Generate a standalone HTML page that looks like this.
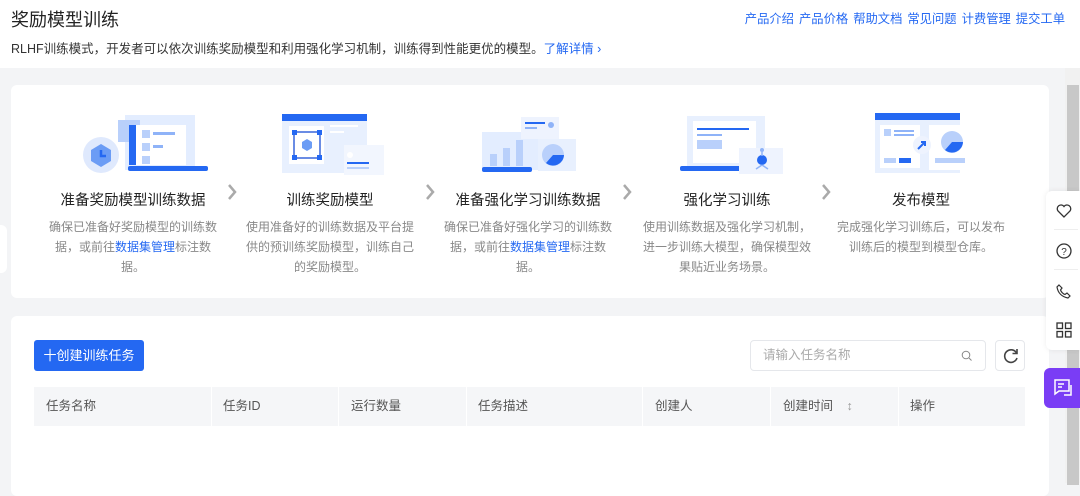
<!DOCTYPE html>
<html><head><meta charset="utf-8"><style>
*{margin:0;padding:0;box-sizing:border-box}
body{width:1080px;height:483px;overflow:hidden;background:#f3f4f6;font-family:"Liberation Sans","Noto Sans CJK SC",sans-serif;position:relative;color:#333}
.abs{position:absolute}
.hdr{left:0;top:0;width:1080px;height:68px;background:#fff}
.title{left:11px;top:6px;font-size:18px;color:#222}
.sub{left:11px;top:38px;font-size:12.5px;color:#333}
.sub a{color:#2468f2;text-decoration:none}
.nav{right:15px;top:9px;font-size:12.3px;color:#2468f2;word-spacing:0}
.nav span{margin-left:5px}
.card1{left:11px;top:85px;width:1038px;height:213px;background:#fff;border-radius:6px}
.step{position:absolute;top:0;width:200px;text-align:center}
.step h4{position:absolute;top:104px;left:0;width:100%;font-size:14.5px;font-weight:normal;color:#222}
.step p{position:absolute;top:132px;left:13px;width:174px;font-size:12px;line-height:20px;color:#888}
.step p b{font-weight:normal;color:#2468f2}
.chev{position:absolute;top:98px;width:10px;height:18px}
.card2{left:11px;top:316px;width:1038px;height:180px;background:#fff;border-radius:6px}
.btn{left:34px;top:340px;width:110px;height:31px;background:#2468f2;border-radius:3px;color:#fff;font-size:13px;line-height:31px;text-align:center}
.search{left:750px;top:340px;width:236px;height:31px;border:1px solid #e5e7eb;border-radius:4px;font-size:12.5px;color:#aaa;line-height:29px;padding-left:12px}
.ref{left:995px;top:340px;width:30px;height:31px;border:1px solid #e5e7eb;border-radius:4px}
.th{left:34px;top:387px;width:991px;height:39px;background:#f5f6f8}
.th div{position:absolute;top:0;height:39px;line-height:39px;font-size:12.5px;color:#555}
.th i{position:absolute;top:0;width:1px;height:39px;background:#fff}
.sb{left:1065px;top:68px;width:15px;height:415px;background:#f1f1f1}
.thumb{left:1067px;top:85px;width:12px;height:400px;background:#c8c8c8}
.panel{left:1046px;top:191px;width:34px;height:159px;background:#fff;border-radius:6px 0 0 6px;box-shadow:0 0 6px rgba(0,0,0,.08)}
.purple{left:1044px;top:368px;width:36px;height:40px;background:#7a3df5;border-radius:6px 0 0 6px}
.lefttab{left:0;top:225px;width:7px;height:48px;background:#fff;border-radius:0 6px 6px 0}
</style></head><body>
<div class="abs hdr"></div>
<div class="abs title">奖励模型训练</div>
<div class="abs sub">RLHF训练模式，开发者可以依次训练奖励模型和利用强化学习机制，训练得到性能更优的模型。<a>了解详情 ›</a></div>
<div class="abs nav"><span>产品介绍</span><span>产品价格</span><span>帮助文档</span><span>常见问题</span><span>计费管理</span><span>提交工单</span></div>

<div class="abs card1">
 <div class="step" style="left:22px">
  <svg class="abs" style="left:50px;top:27px" width="140" height="65">
   <rect x="42" y="3" width="70" height="55" fill="#e3edff"/>
   <rect x="35" y="8" width="22" height="22" fill="#b9d0fb"/>
   <rect x="53" y="13" width="50" height="40" fill="#fff"/>
   <rect x="46" y="13" width="7" height="40" fill="#2468f2"/>
   <rect x="59" y="18" width="8" height="8" fill="#b9d0fb"/><rect x="70" y="20" width="22" height="3" fill="#8fb3f8"/>
   <rect x="59" y="31" width="8" height="8" fill="#b9d0fb"/><rect x="70" y="33" width="10" height="3" fill="#8fb3f8"/>
   <rect x="59" y="44" width="8" height="8" fill="#b9d0fb"/>
   <rect x="45" y="54" width="80" height="5" rx="2" fill="#2468f2"/>
   <circle cx="18" cy="43" r="18" fill="#dfe9fd"/><polygon points="18,32 28,38 28,49 18,55 8,49 8,38" fill="#6b9cf5"/><path d="M18 38v6h5" stroke="#2468f2" stroke-width="2.5" fill="none"/>
  </svg>
  <h4>准备奖励模型训练数据</h4><p>确保已准备好奖励模型的训练数据，或前往<b>数据集管理</b>标注数据。</p>
 </div>
 <div class="step" style="left:219px">
  <svg class="abs" style="left:50px;top:27px" width="110" height="65">
   <rect x="2" y="3" width="85" height="58" fill="#e8f0fe"/><rect x="2" y="2" width="85" height="7" fill="#2468f2"/>
   <rect x="9" y="14" width="35" height="38" fill="#fff"/><rect x="14" y="20" width="26" height="26" fill="none" stroke="#1a4fd6" stroke-width="1.3"/>
   <rect x="12" y="18" width="5" height="5" fill="#2468f2"/><rect x="37" y="18" width="5" height="5" fill="#2468f2"/><rect x="12" y="43" width="5" height="5" fill="#2468f2"/><rect x="37" y="43" width="5" height="5" fill="#2468f2"/>
   <polygon points="27,27 32,30 32,36 27,39 22,36 22,30" fill="#6b9cf5"/>
   <rect x="50" y="13" width="28" height="2" fill="#fff"/><rect x="50" y="19" width="14" height="2" fill="#fff"/>
   <rect x="64" y="33" width="40" height="30" fill="#f2f6fe"/><circle cx="70" cy="43" r="3" fill="#fff"/><rect x="67" y="50" width="22" height="2" fill="#2468f2"/><rect x="67" y="55" width="22" height="2" fill="#b9d0fb"/>
  </svg>
  <h4>训练奖励模型</h4><p>使用准备好的训练数据及平台提供的预训练奖励模型，训练自己的奖励模型。</p>
 </div>
 <div class="step" style="left:417px">
  <svg class="abs" style="left:50px;top:27px" width="110" height="65">
   <rect x="4" y="20" width="60" height="38" fill="#e3edff"/>
   <rect x="12" y="42" width="7" height="12" fill="#b9d0fb"/><rect x="25" y="36" width="7" height="18" fill="#b9d0fb"/><rect x="38" y="28" width="7" height="26" fill="#b9d0fb"/>
   <rect x="4" y="55" width="50" height="5" rx="2" fill="#2468f2"/>
   <rect x="43" y="5" width="38" height="22" fill="#eef3fe"/><rect x="47" y="10" width="20" height="2" fill="#2468f2"/><rect x="47" y="15" width="12" height="2" fill="#8fb3f8"/><circle cx="73" cy="13" r="3" fill="#8fb3f8"/>
   <rect x="60" y="27" width="38" height="32" fill="#e8f0fe"/><circle cx="75" cy="43" r="11" fill="#b9d0fb"/><path d="M75 43h11a11 11 0 0 1-18 8z" fill="#2468f2"/>
  </svg>
  <h4>准备强化学习训练数据</h4><p>确保已准备好强化学习的训练数据，或前往<b>数据集管理</b>标注数据。</p>
 </div>
 <div class="step" style="left:616px">
  <svg class="abs" style="left:50px;top:27px" width="120" height="65">
   <rect x="10" y="4" width="78" height="52" fill="#e8f0fe"/><rect x="16" y="9" width="63" height="42" fill="#fff"/>
   <rect x="20" y="16" width="52" height="2" fill="#2468f2"/><rect x="20" y="22" width="25" height="2" fill="#8fb3f8"/><rect x="20" y="28" width="25" height="9" fill="#b9d0fb"/>
   <rect x="3" y="54" width="70" height="5" rx="2" fill="#2468f2"/>
   <rect x="62" y="36" width="44" height="26" fill="#eef3fe"/><circle cx="85" cy="48" r="5" fill="#2468f2"/><circle cx="85" cy="38" r="2" fill="#8fb3f8"/><path d="M85 40v4M85 53l-6 4M85 53l6 4" stroke="#8fb3f8" stroke-width="1.5"/>
  </svg>
  <h4>强化学习训练</h4><p>使用训练数据及强化学习机制，进一步训练大模型，确保模型效果贴近业务场景。</p>
 </div>
 <div class="step" style="left:810px">
  <svg class="abs" style="left:50px;top:27px" width="110" height="65">
   <rect x="4" y="3" width="85" height="58" fill="#e8f0fe"/><rect x="4" y="1" width="85" height="7" fill="#2468f2"/>
   <rect x="9" y="13" width="40" height="43" fill="#fff"/><rect x="13" y="17" width="7" height="7" fill="#b9d0fb"/><rect x="23" y="18" width="20" height="2" fill="#8fb3f8"/><rect x="23" y="22" width="20" height="2" fill="#8fb3f8"/>
   <rect x="13" y="46" width="12" height="5" fill="#b9d0fb"/><rect x="28" y="46" width="12" height="5" fill="#2468f2"/>
   <rect x="58" y="13" width="42" height="45" fill="#fff"/><circle cx="81" cy="30" r="11" fill="#b9d0fb"/><path d="M81 30h11a11 11 0 0 1-18 8z" fill="#2468f2"/><rect x="64" y="46" width="30" height="5" fill="#b9d0fb"/>
   <circle cx="51" cy="33" r="9" fill="#eef3fe"/><path d="M47 37l7-7M50 30h4v4" stroke="#2468f2" stroke-width="2" fill="none"/>
  </svg>
  <h4>发布模型</h4><p>完成强化学习训练后，可以发布训练后的模型到模型仓库。</p>
 </div>
 <svg class="chev" style="left:216px" viewBox="0 0 10 18"><path d="M2 2l6 7-6 7" stroke="#aaa" stroke-width="2.5" fill="none"/></svg>
 <svg class="chev" style="left:414px" viewBox="0 0 10 18"><path d="M2 2l6 7-6 7" stroke="#aaa" stroke-width="2.5" fill="none"/></svg>
 <svg class="chev" style="left:611px" viewBox="0 0 10 18"><path d="M2 2l6 7-6 7" stroke="#aaa" stroke-width="2.5" fill="none"/></svg>
 <svg class="chev" style="left:810px" viewBox="0 0 10 18"><path d="M2 2l6 7-6 7" stroke="#aaa" stroke-width="2.5" fill="none"/></svg>
</div>
<div class="abs lefttab"></div>

<div class="abs card2"></div>
<div class="abs btn">十创建训练任务</div>
<div class="abs search">请输入任务名称<svg class="abs" style="right:12px;top:9px" width="12" height="12"><circle cx="5" cy="5" r="3.8" stroke="#888" fill="none"/><path d="M8 8l2.5 2.5" stroke="#888"/></svg></div>
<div class="abs ref"><svg class="abs" style="left:6px;top:6px" width="18" height="18" viewBox="0 0 18 18"><path d="M14.5 6A6.3 6.3 0 1 0 15 11" stroke="#444" stroke-width="1.6" fill="none"/><path d="M15 2v4.5h-4.5" stroke="#444" stroke-width="1.6" fill="none"/></svg></div>
<div class="abs th">
 <div style="left:12px">任务名称</div><i style="left:177px"></i>
 <div style="left:189px">任务ID</div><i style="left:304px"></i>
 <div style="left:317px">运行数量</div><i style="left:432px"></i>
 <div style="left:444px">任务描述</div><i style="left:608px"></i>
 <div style="left:621px">创建人</div><i style="left:736px"></i>
 <div style="left:749px">创建时间 <span style="color:#999;margin-left:10px">↕</span></div><i style="left:864px"></i>
 <div style="left:876px">操作</div>
</div>

<div class="abs sb"></div><div class="abs thumb"></div>
<div class="abs panel">
 <svg class="abs" style="left:10px;top:13px" width="16" height="14" viewBox="0 0 16 14"><path d="M8 13L2 7A3.4 3.4 0 0 1 8 2.5 3.4 3.4 0 0 1 14 7z" stroke="#333" stroke-width="1.3" fill="none"/></svg>
 <div class="abs" style="left:8px;top:38px;width:24px;height:1px;background:#eee"></div>
 <svg class="abs" style="left:10px;top:52px" width="16" height="16"><circle cx="8" cy="8" r="7" stroke="#333" stroke-width="1.3" fill="none"/><text x="8" y="12" font-size="10" text-anchor="middle" fill="#333" font-family="Liberation Sans">?</text></svg>
 <div class="abs" style="left:8px;top:78px;width:24px;height:1px;background:#eee"></div>
 <svg class="abs" style="left:10px;top:92px" width="16" height="16" viewBox="0 0 16 16"><path d="M3 2l3 3-1.5 2a8 8 0 0 0 4.5 4.5L11 10l3 3-2 2C6 14 2 10 1 4z" stroke="#333" stroke-width="1.2" fill="none"/></svg>
 <svg class="abs" style="left:10px;top:131px" width="16" height="16"><g stroke="#333" stroke-width="1.3" fill="none"><rect x="1" y="1" width="5.5" height="5.5"/><rect x="9.5" y="1" width="5.5" height="5.5"/><rect x="1" y="9.5" width="5.5" height="5.5"/><rect x="9.5" y="9.5" width="5.5" height="5.5"/></g></svg>
</div>
<div class="abs purple"><svg class="abs" style="left:9px;top:10px" width="20" height="20" viewBox="0 0 20 20"><path d="M2 2h14v11H6l-4 3z" stroke="#fff" stroke-width="1.5" fill="none"/><path d="M5 6h6M5 9h4M18 7v10h-7" stroke="#fff" stroke-width="1.5" fill="none"/></svg></div>
</body></html>
